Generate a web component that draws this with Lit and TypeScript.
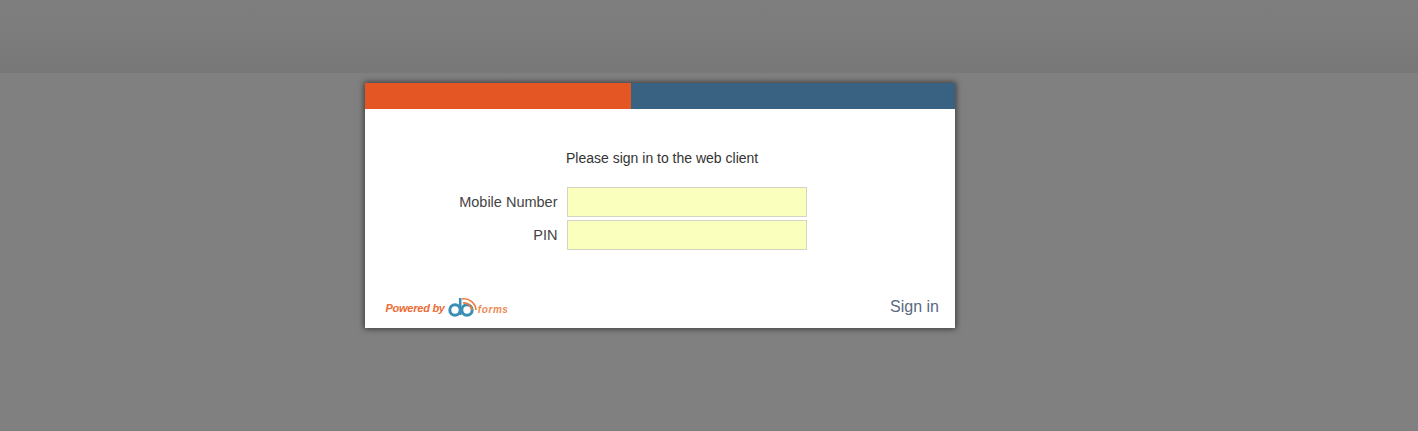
import { LitElement, html, css } from "lit";
import { customElement } from "lit/decorators.js";

@customElement("app-root")
export class AppRoot extends LitElement {
  static styles = css`
    :host { display: block; width: 1418px; height: 431px; background: #808080; font-family: "Liberation Sans", Arial, sans-serif; overflow: hidden; position: relative; }
    .top { height: 73px; background: linear-gradient(#7f7f7f, #787878); }
    .wrap { display: flex; padding: 10px 0 0 365px; }
    .card { width: 590px; height: 245px; background: #fff; box-shadow: 0 0 6px 1px rgba(0,0,0,.55); display: flex; flex-direction: column; }
    .bar { display: flex; height: 26px; flex: none; }
    .bar .o { width: 266px; background: #e55625; }
    .bar .b { flex: 1; background: #396181; }
    .title { margin: 40px 0 0 201px; font-size: 14px; line-height: 18px; color: #333; height: 18px; white-space: nowrap; }
    .form { margin-top: 20px; display: grid; grid-template-columns: 192.5px 240px; column-gap: 9.5px; row-gap: 3px; }
    label { font-size: 14.5px; color: #444; text-align: right; line-height: 30px; }
    .in { width: 240px; height: 30px; box-sizing: border-box; background: #fbffbd; border: 1px solid #d4d4c4; margin: 0; padding: 0; display: block; outline: none; }
    .foot { margin-top: auto; display: flex; justify-content: space-between; padding: 0 16px 11px 20.5px; align-items: flex-end; }
    .logo { display: flex; align-items: flex-end; height: 20px; }
    .pow { font-size: 11px; font-style: italic; font-weight: bold; color: #ee6a33; line-height: 17px; letter-spacing: -.25px; white-space: nowrap; }
    .forms { font-size: 10px; font-style: italic; font-weight: bold; color: #ee8a55; letter-spacing: .6px; line-height: 14px; margin-left: 1px; }
    svg { display: block; margin-left: 2px; }
    .sign { font-size: 16px; color: #5a6a80; line-height: 20px; text-decoration: none; }
  `;
  render() {
    return html`
      <div class="top"></div>
      <div class="wrap">
        <div class="card">
          <div class="bar"><div class="o"></div><div class="b"></div></div>
          <div class="title">Please sign in to the web client</div>
          <div class="form">
            <label>Mobile Number</label><input class="in" />
            <label>PIN</label><input class="in" type="password" />
          </div>
          <div class="foot">
            <div class="logo">
              <span class="pow">Powered by</span>
              <svg width="30" height="20" viewBox="0 0 30 20" fill="none">
                <circle cx="8" cy="13" r="5.2" stroke="#3a8fb5" stroke-width="3"/>
                <path d="M13.2 1V18" stroke="#3a8fb5" stroke-width="2.6"/>
                <circle cx="20" cy="13" r="5.2" stroke="#3a8fb5" stroke-width="3"/>
                <path d="M15 2a12 12 0 0 1 14 11M16 6a8 8 0 0 1 9 7" stroke="#ee7a3a" stroke-width="1.6"/>
              </svg>
              <span class="forms">forms</span>
            </div>
            <a class="sign" href="#">Sign in</a>
          </div>
        </div>
      </div>
    `;
  }
}
